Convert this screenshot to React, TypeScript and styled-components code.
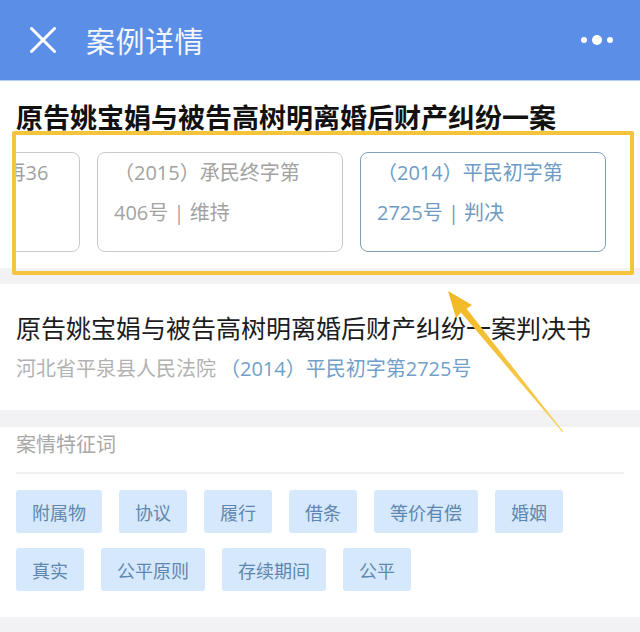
import * as React from 'react';
import styled, { createGlobalStyle } from 'styled-components';

const GlobalStyle = createGlobalStyle`
  html, body {
    margin: 0;
    padding: 0;
    background: #f2f2f4;
  }
  body {
    font-family: "Open Sans", "Noto Sans CJK SC", sans-serif;
  }
`;

const Page = styled.div`
  position: relative;
  width: 640px;
  height: 632px;
  overflow: hidden;
  background: #f2f2f4;
`;

const Header = styled.div`
  height: 80px;
  display: flex;
  align-items: center;
  padding: 0 27px 0 28px;
  background: #5b8ee6;
  border-bottom: 1px solid #b4cdf2;
  color: #fff;
`;

const CloseButton = styled.div`
  width: 30px;
  height: 30px;
  display: flex;
  align-items: center;
  justify-content: center;
`;

const HeaderTitle = styled.div`
  margin-left: 28px;
  font-family: "Noto Sans CJK SC", sans-serif;
  font-size: 29px;
  letter-spacing: 0.5px;
  color: #f4f7fd;
  flex: 1;
`;

const Dots = styled.div`
  display: flex;
  align-items: center;
  gap: 5px;
`;

const Dot = styled.span<{ $big?: boolean }>`
  width: ${p => (p.$big ? 10 : 6)}px;
  height: ${p => (p.$big ? 10 : 6)}px;
  border-radius: 50%;
  background: #fff;
`;

const Section = styled.div<{ $top: number; $bottom: number; $gap?: number }>`
  background: #fff;
  padding: ${p => p.$top}px 16px ${p => p.$bottom}px 16px;
  margin-bottom: ${p => p.$gap ?? 0}px;
`;

const CaseTitle = styled.div`
  font-family: "Noto Sans CJK SC", sans-serif;
  font-size: 27px;
  line-height: 36px;
  font-weight: 700;
  color: #111;
  white-space: nowrap;
`;

const CardStrip = styled.div`
  display: flex;
  gap: 17px;
  margin-top: 17px;
  overflow: hidden;
`;

const Card = styled.div<{ $active?: boolean; $offset?: number; $width?: number }>`
  flex: 0 0 auto;
  box-sizing: border-box;
  width: ${p => p.$width ?? 246}px;
  height: 100px;
  margin-left: ${p => p.$offset ?? 0}px;
  padding: 0 16px;
  border: 1.5px solid ${p => (p.$active ? '#7f9fb6' : '#c9c9c9')};
  border-radius: 8px;
  color: ${p => (p.$active ? '#6e9bc4' : '#a2a2a2')};
  font-size: 20px;
  line-height: 40px;
  white-space: nowrap;
`;

const DocTitle = styled.div`
  font-family: "Noto Sans CJK SC", sans-serif;
  font-size: 25px;
  line-height: 34px;
  color: #1c1c1c;
  white-space: nowrap;
`;

const DocMeta = styled.div`
  margin-top: 11px;
  font-size: 20px;
  line-height: 28px;
  color: #b2b2b2;
  white-space: nowrap;
`;

const CaseNo = styled.span`
  color: #72a0c8;
  margin-left: 4px;
`;

const Label = styled.div`
  font-size: 20px;
  line-height: 28px;
  color: #a8a8a8;
`;

const Divider = styled.div`
  height: 2px;
  background: #f0f0f0;
  margin: 13px 0 16px;
`;

const Tags = styled.div`
  display: flex;
  flex-wrap: wrap;
  gap: 15px 17px;
`;

const Tag = styled.div`
  height: 43px;
  padding: 0 16px;
  display: flex;
  align-items: center;
  background: #d6e8fb;
  border-radius: 3px;
  color: #5e87b0;
  font-size: 18px;
`;

const Highlight = styled.div`
  position: absolute;
  left: 12px;
  top: 131px;
  width: 622px;
  height: 144px;
  box-sizing: border-box;
  border: 4px solid #f3c43c;
  border-radius: 2px;
  pointer-events: none;
`;

const ArrowLayer = styled.svg`
  position: absolute;
  left: 0;
  top: 0;
  pointer-events: none;
`;

const cards = [
  { lines: ['（2016）冀08民再36', '号 | 改判'], offset: -176, width: 240 },
  { lines: ['（2015）承民终字第', '406号 | 维持'] },
  { lines: ['（2014）平民初字第', '2725号 | 判决'], active: true },
];

const tags = ['附属物', '协议', '履行', '借条', '等价有偿', '婚姻', '真实', '公平原则', '存续期间', '公平'];

export default function App() {
  return (
    <Page>
      <GlobalStyle />
      <Header>
        <CloseButton>
          <svg width="26" height="26" viewBox="0 0 26 26">
            <path d="M1.5 1.5 L24.5 24.5 M24.5 1.5 L1.5 24.5" stroke="#fff" strokeWidth="3" strokeLinecap="round" />
          </svg>
        </CloseButton>
        <HeaderTitle>案例详情</HeaderTitle>
        <Dots>
          <Dot />
          <Dot $big />
          <Dot />
        </Dots>
      </Header>

      <Section $top={18} $bottom={16} $gap={16}>
        <CaseTitle>原告姚宝娟与被告高树明离婚后财产纠纷一案</CaseTitle>
        <CardStrip>
          {cards.map((c, i) => (
            <Card key={i} $active={c.active} $offset={c.offset} $width={c.width}>
              <div>{c.lines[0]}</div>
              <div>{c.lines[1]}</div>
            </Card>
          ))}
        </CardStrip>
      </Section>

      <Section $top={26} $bottom={27} $gap={17}>
        <DocTitle>原告姚宝娟与被告高树明离婚后财产纠纷一案判决书</DocTitle>
        <DocMeta>
          河北省平泉县人民法院<CaseNo>（2014）平民初字第2725号</CaseNo>
        </DocMeta>
      </Section>

      <Section $top={4} $bottom={26}>
        <Label>案情特征词</Label>
        <Divider />
        <Tags>
          {tags.map(t => (
            <Tag key={t}>{t}</Tag>
          ))}
        </Tags>
      </Section>

      <Highlight />
      <ArrowLayer width="640" height="632" viewBox="0 0 640 632">
        <defs>
          <linearGradient id="arrowFill" x1="448" y1="291" x2="563" y2="432" gradientUnits="userSpaceOnUse">
            <stop offset="0" stopColor="#f2b824" />
            <stop offset="1" stopColor="#f6cf55" />
          </linearGradient>
        </defs>
        <polygon
          points="448,291 472,305 466.6,308.8 563.4,431.7 562.6,432.3 461,312.6 456,318"
          fill="url(#arrowFill)"
        />
      </ArrowLayer>
    </Page>
  );
}
